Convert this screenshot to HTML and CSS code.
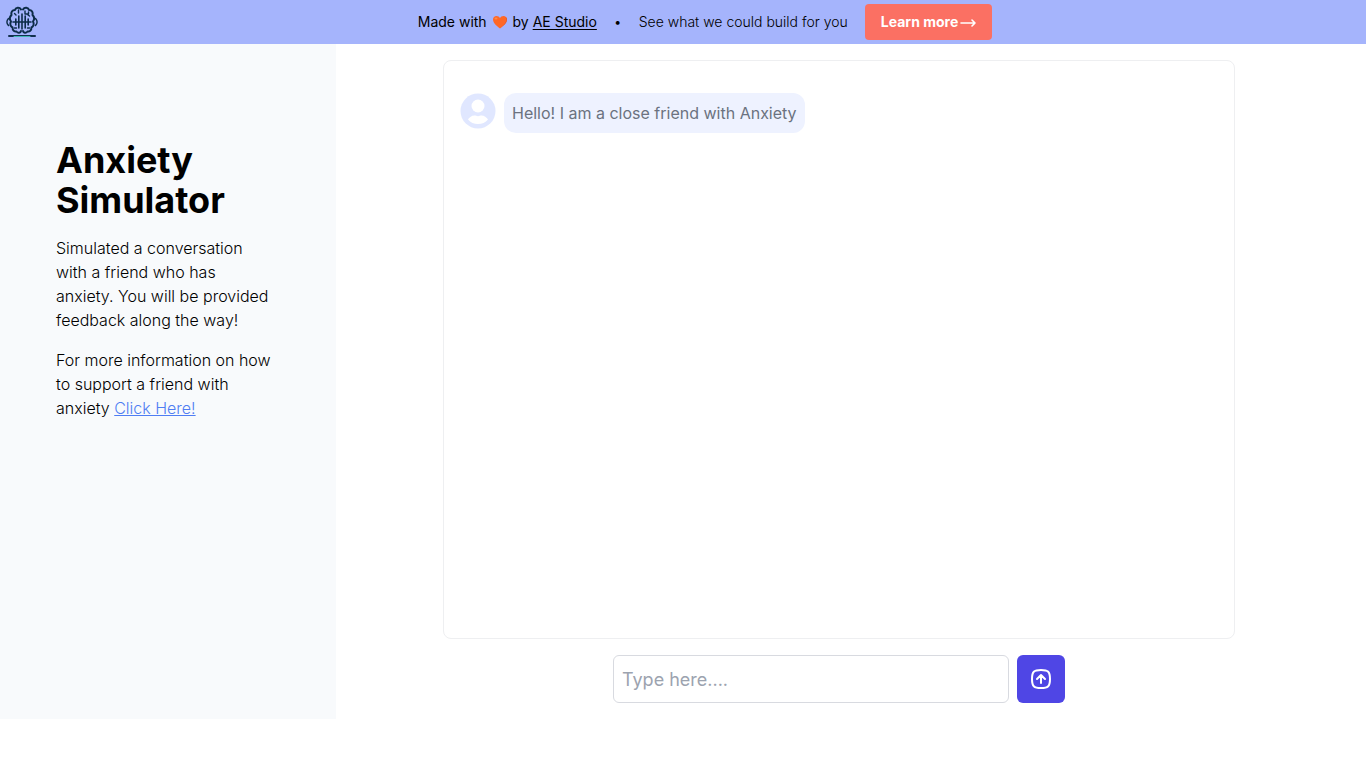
FILE: index.html
```html
<!DOCTYPE html>
<html lang="en">
<head>
    <meta charset="UTF-8">
    <meta name="viewport" content="width=device-width, initial-scale=1.0">
    <title>Anxiety Simulator</title>
    <link rel="stylesheet" href="styles.css">
</head>
<body>

    <header class="banner">
        <a class="logo" href="#" aria-label="Home">
            <svg viewBox="0 0 32 32" width="32" height="32" fill="none" stroke="#0d2c48" stroke-width="2" stroke-linecap="round" stroke-linejoin="round">
                <path d="M15 3.500C13.500.8 9.500 1.300 9 4 6 4 4.800 6.500 5.500 9 3.500 11 3.500 13.500 5 15.500 3.500 18 4.500 20.500 6.500 21.500 6.500 24.500 8.500 26 10.500 25.500 12 27.500 14.500 27 15 25"/>
                <path d="M17 3.500C18.500.8 22.500 1.300 23 4c3 0 4.200 2.500 3.500 5 2 2 2 4.500.5 6.500 1.500 2.500.5 5-1.500 6 0 3-2 4.500-4 4-1.500 2-4 1.500-4.500-.5"/>
                <path stroke-width="1.600" d="M2.500 12.500c-2 2-2 5 0 7M29.500 12.500c2 2 2 5 0 7"/>
                <path stroke-width="1.600" d="M16 8v15M12.800 10v12M19.200 10v12M9.800 13v6M22.200 13v6M7 16h18"/>
                <path stroke-width="1.400" d="M12.500 4v3M8.500 7.500L10 9M19 5v3h3.500V6M23.500 10l-1.500-1M8.500 22h2M23.500 22h-2"/>
                <path stroke="#12304f" d="M3 30h26"/>
                <path stroke="#3fb6b0" stroke-width="1" d="M8 30.500h16"/>
            </svg>
        </a>
        <div class="banner-content">
            <p class="made-with">
                Made with
                <svg class="heart" viewBox="0 0 16 16" width="16" height="16" aria-label="love">
                    <path fill="#ff6726" d="M8 14.500C5.500 12.800 1 9 1 5.500 1 3.300 2.600 2 4.500 2 6 2 7.300 2.800 8 4c.7-1.200 2-2 3.500-2C13.400 2 15 3.300 15 5.500c0 3.500-4.500 7.300-7 9z"/>
                    <path fill="#dd5632" d="M13.500 3c2 3 .5 6.500-5.500 11.500 2.500-1.700 7-5.500 7-9 0-1-.5-2-1.500-2.500z"/>
                    <ellipse cx="4" cy="4.500" rx="1.500" ry="1" fill="#ff8b45"/>
                </svg>
                by <a href="#">AE Studio</a>
            </p>
            <span class="dot">•</span>
            <p class="pitch">See what we could build for you</p>
            <a class="learn-more" href="#">Learn more
                <svg viewBox="0 0 16 12" width="16" height="12" fill="none" stroke="currentColor" stroke-width="1.600" stroke-linecap="round" stroke-linejoin="round">
                    <path d="M1 7h14M12 4l3 3-3 3"/>
                </svg>
            </a>
        </div>
    </header>

    <div class="page">
        <aside class="sidebar">
            <h1>Anxiety Simulator</h1>
            <p>Simulated a conversation with a friend who has anxiety. You will be provided feedback along the way!</p>
            <p>For more information on how to support a friend with anxiety <a href="#">Click Here!</a></p>
        </aside>

        <main class="chat">
            <div class="messages">
                <div class="message">
                    <svg class="avatar" viewBox="0 0 36 36" width="36" height="36">
                        <circle cx="18" cy="18" r="17.500" fill="#e0e7ff"/>
                        <circle cx="18" cy="13" r="6.500" fill="#fff"/>
                        <path fill="#fff" d="M8 26.500c2.500-3.500 5-4 6.500-4 1.500 0 2 .7 3.500.7s2-.7 3.500-.7c1.500 0 4 .5 6.500 4-2.500 3-6 4.500-10 4.500s-7.500-1.500-10-4.500z"/>
                    </svg>
                    <p class="bubble">Hello! I am a close friend with Anxiety</p>
                </div>
            </div>
            <form class="composer">
                <input type="text" placeholder="Type here...." aria-label="Message">
                <button type="submit" aria-label="Send">
                    <svg viewBox="0 0 24 24" width="24" height="24" fill="none" stroke="currentColor" stroke-width="2" stroke-linecap="round" stroke-linejoin="round">
                        <path d="M12 3c7.200 0 9 1.800 9 9s-1.800 9-9 9-9-1.800-9-9 1.800-9 9-9z"/>
                        <path d="M12 16V8M8 12l4-4 4 4"/>
                    </svg>
                </button>
            </form>
        </main>
    </div>

</body>
</html>
```
FILE: styles.css
```css
* {
    box-sizing: border-box;
}
body {
    margin: 0;
    font-family: Inter, sans-serif;
    font-size: 16px;
    font-weight: 300;
    line-height: 24px;
    color: #000;
    background: #fff;
}
h1, p {
    margin: 0;
}
.banner {
    display: flex;
    align-items: center;
    height: 44px;
    padding: 0 6px;
    background: #a5b4fc;
    font-size: 14px;
    line-height: 20px;
}
.logo {
    display: flex;
}
.banner-content {
    flex: 1;
    display: flex;
    align-items: center;
    justify-content: center;
    padding-left: 12px;
}
.made-with {
    font-weight: 400;
}
.made-with a {
    color: inherit;
    text-underline-offset: 2px;
}
.heart {
    margin: 0 1px;
    vertical-align: -3px;
}
.dot {
    margin: 0 17px;
}
.learn-more {
    display: flex;
    align-items: center;
    gap: 2px;
    margin-left: 17px;
    padding: 8px 16px;
    border-radius: 4px;
    background: #fb7063;
    color: #fff;
    font-weight: 700;
    text-decoration: none;
}
.page {
    display: flex;
}
.sidebar {
    width: 336px;
    padding: 96px 60px 0 56px;
    background: #f8fafc;
}
.sidebar h1 {
    font-size: 36px;
    font-weight: 700;
    line-height: 40px;
}
.sidebar p {
    margin-top: 16px;
}
.sidebar a {
    color: #4f7df3;
}
.chat {
    flex: 1;
    display: flex;
    flex-direction: column;
    align-items: center;
    gap: 16px;
    padding: 16px 24px 16px 0;
}
.messages {
    width: 100%;
    max-width: 792px;
    height: calc(100vh - 189px);
    padding: 32px 16px;
    border: 1px solid #eeeff1;
    border-radius: 8px;
}
.message {
    display: flex;
    gap: 8px;
}
.bubble {
    padding: 8px;
    border-radius: 12px;
    background: #eef2ff;
    color: #6b7280;
    font-weight: 400;
}
.composer {
    display: flex;
    gap: 8px;
    width: 100%;
    max-width: 452px;
}
.composer input {
    flex: 1;
    min-width: 0;
    height: 48px;
    padding: 8px;
    border: 1px solid #d8dae0;
    border-radius: 6px;
    font: inherit;
    font-size: 18px;
    font-weight: 400;
    background: #fff;
}
.composer input::placeholder {
    color: #9ca3af;
}
.composer button {
    display: flex;
    align-items: center;
    justify-content: center;
    width: 48px;
    height: 48px;
    padding: 0;
    border: 0;
    border-radius: 6px;
    background: #4f46e5;
    color: #fff;
    cursor: pointer;
}
```
